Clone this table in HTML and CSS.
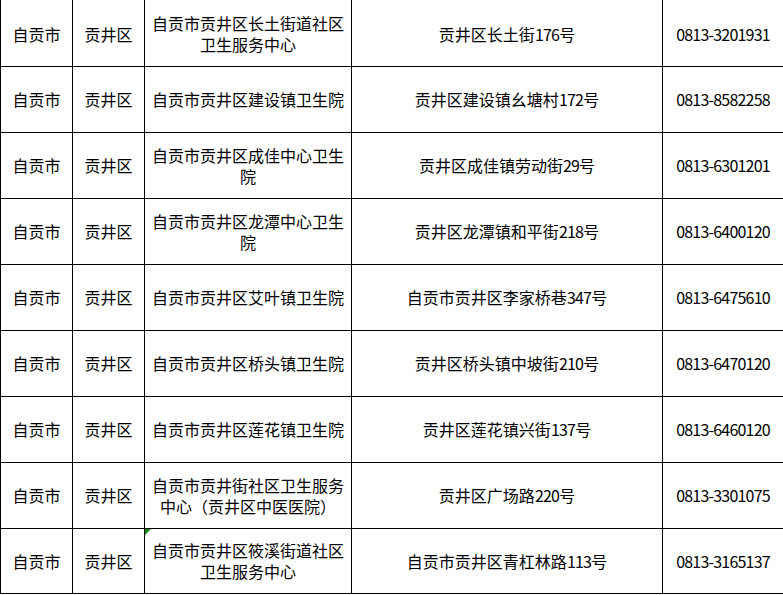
FILE: index.html
```html
<!DOCTYPE html>
<html lang="zh">
<head>
<meta charset="utf-8">
<link rel="stylesheet" href="styles.css">
</head>
<body>
<table class="sheet">
<colgroup>
<col class="c1"><col class="c2"><col class="c3"><col class="c4"><col class="c5">
</colgroup>
<tbody>
<tr class="first"><td>自贡市</td><td>贡井区</td><td>自贡市贡井区长土街道社区卫生服务中心</td><td>贡井区长土街<span class="n">176</span>号</td><td class="n">0813-3201931</td></tr>
<tr><td>自贡市</td><td>贡井区</td><td>自贡市贡井区建设镇卫生院</td><td>贡井区建设镇幺塘村<span class="n">172</span>号</td><td class="n">0813-8582258</td></tr>
<tr><td>自贡市</td><td>贡井区</td><td>自贡市贡井区成佳中心卫生院</td><td>贡井区成佳镇劳动街<span class="n">29</span>号</td><td class="n">0813-6301201</td></tr>
<tr><td>自贡市</td><td>贡井区</td><td>自贡市贡井区龙潭中心卫生院</td><td>贡井区龙潭镇和平街<span class="n">218</span>号</td><td class="n">0813-6400120</td></tr>
<tr><td>自贡市</td><td>贡井区</td><td>自贡市贡井区艾叶镇卫生院</td><td>自贡市贡井区李家桥巷<span class="n">347</span>号</td><td class="n">0813-6475610</td></tr>
<tr><td>自贡市</td><td>贡井区</td><td>自贡市贡井区桥头镇卫生院</td><td>贡井区桥头镇中坡街<span class="n">210</span>号</td><td class="n">0813-6470120</td></tr>
<tr><td>自贡市</td><td>贡井区</td><td>自贡市贡井区莲花镇卫生院</td><td>贡井区莲花镇兴街<span class="n">137</span>号</td><td class="n">0813-6460120</td></tr>
<tr><td>自贡市</td><td>贡井区</td><td>自贡市贡井街社区卫生服务中心（贡井区中医医院）</td><td>贡井区广场路<span class="n">220</span>号</td><td class="n">0813-3301075</td></tr>
<tr class="last"><td>自贡市</td><td>贡井区</td><td class="flag">自贡市贡井区筱溪街道社区卫生服务中心</td><td>自贡市贡井区青杠林路<span class="n">113</span>号</td><td class="n">0813-3165137</td></tr>
</tbody>
</table>
</body>
</html>
```

FILE: styles.css
```css
html, body {
  margin: 0;
  padding: 0;
  background: #ffffff;
}

body {
  font-family: "Noto Sans CJK SC", "Noto Sans", sans-serif;
  font-size: 16px;
  color: #000000;
  overflow: hidden;
}

.sheet {
  border-collapse: collapse;
  table-layout: fixed;
  width: 783px;
  margin-top: -1px;
}

.c1 { width: 72px; }
.c2 { width: 72px; }
.c3 { width: 207px; }
.c4 { width: 311px; }
.c5 { width: 121px; }

.sheet td {
  border: 1px solid #000000;
  height: 66px;
  padding: 0 6px;
  text-align: center;
  vertical-align: middle;
  line-height: 21px;
  word-break: break-all;
  box-sizing: border-box;
}

.sheet tr.first td {
  height: 67px;
  padding-top: 2px;
}

.sheet tr.last td {
  height: 65px;
}

.n {
  letter-spacing: -0.8px;
}

.sheet td.n {
  padding: 0;
}

.flag {
  position: relative;
}

.flag::before {
  content: "";
  position: absolute;
  left: 0;
  top: 0;
  width: 0;
  height: 0;
  border-top: 6px solid #1a8a1a;
  border-right: 6px solid transparent;
}
```
